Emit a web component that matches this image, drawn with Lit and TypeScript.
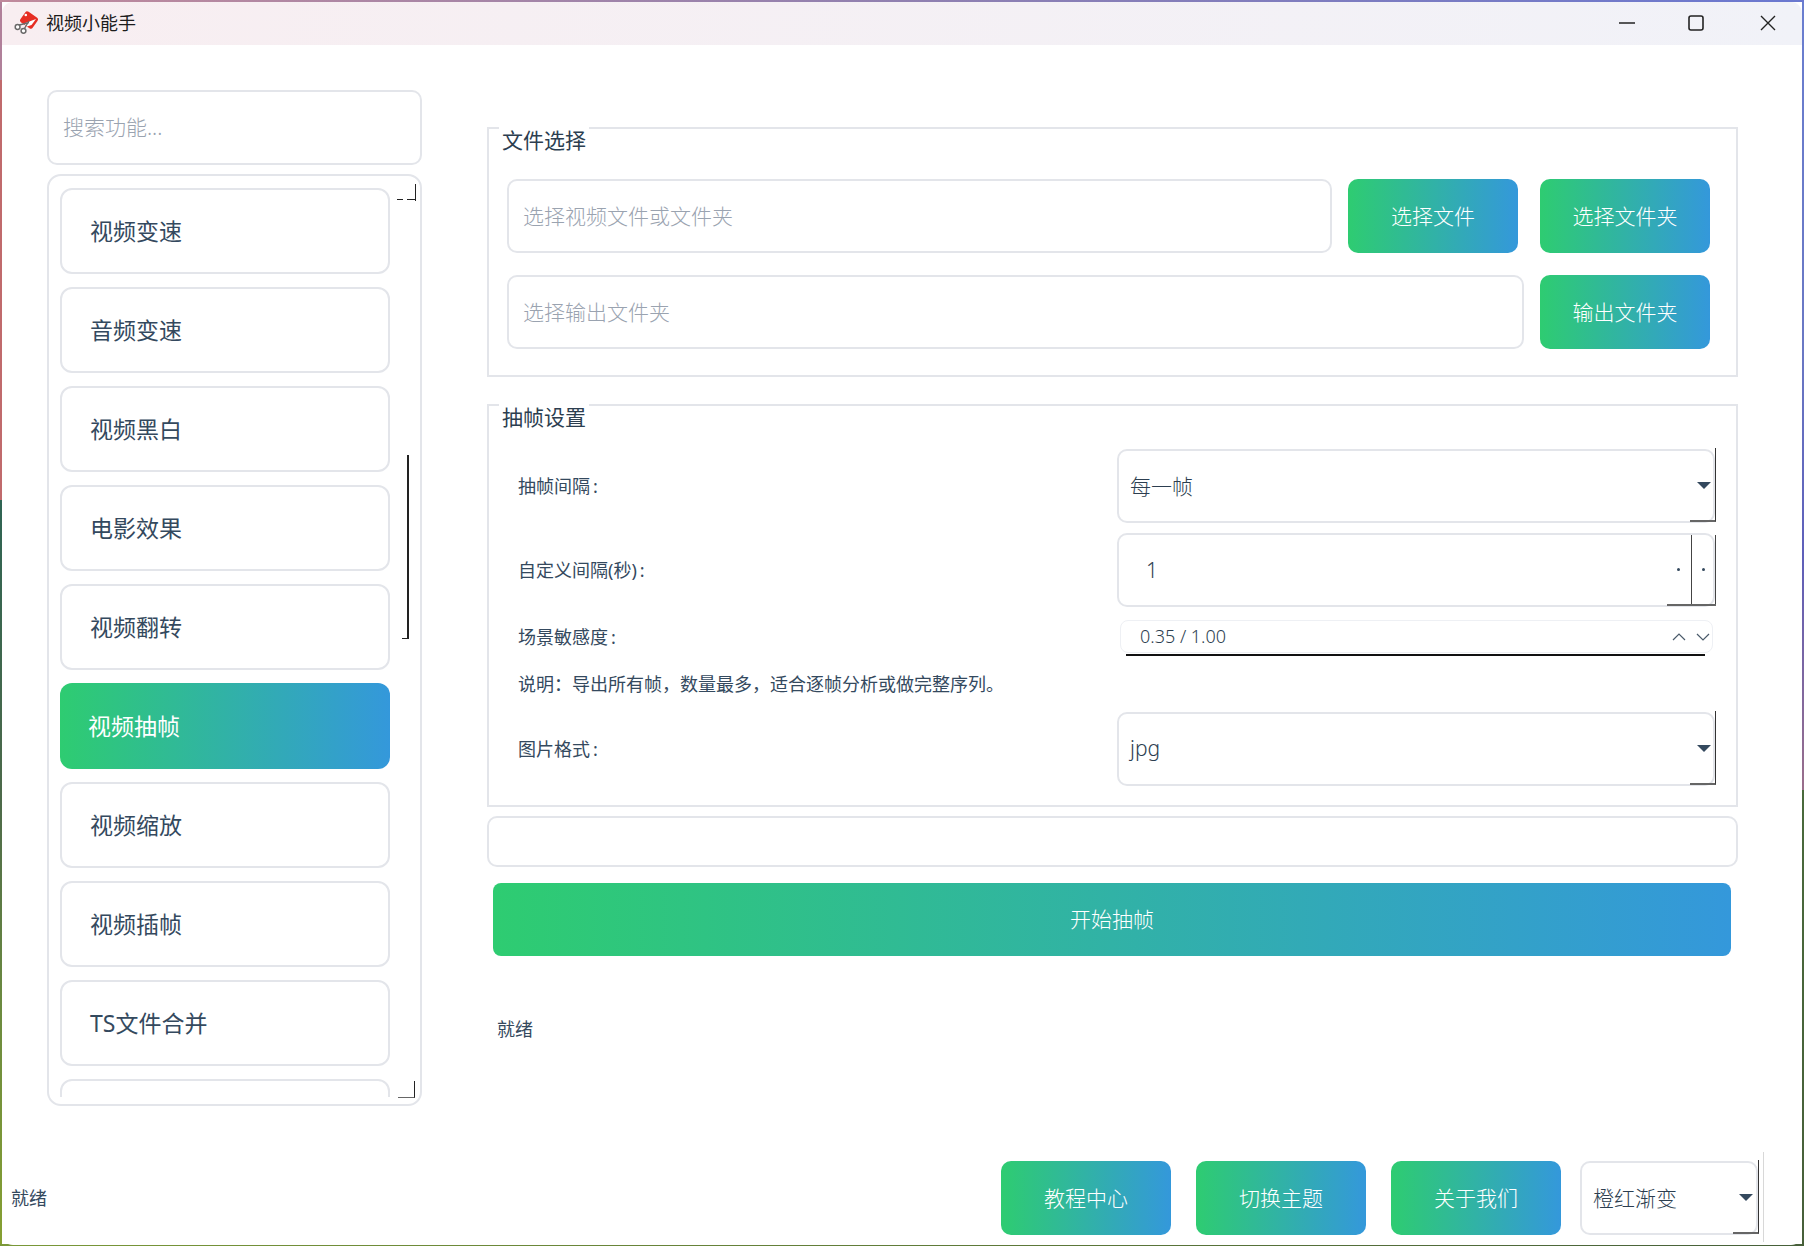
import { LitElement, html, css, svg } from 'lit'
import { customElement } from 'lit/decorators.js'

const NAV = ['视频变速', '音频变速', '视频黑白', '电影效果', '视频翻转', '视频抽帧', '视频缩放', '视频插帧', 'TS文件合并', '']

@customElement('app-root')
export class AppRoot extends LitElement {
    static styles = css`
        :host {
            display: block;
            width: 1804px;
            height: 1246px;
            overflow: hidden;
            box-sizing: border-box;
            padding: 2px 2px 1px;
            font-family: "Noto Sans", "Noto Sans CJK SC", sans-serif;
            font-weight: 300;
            color: #2c3e50;
            background:
                linear-gradient(90deg, #c08a9c 0%, #9080b0 50%, #6a78d0 100%) top / 100% 2px no-repeat,
                linear-gradient(90deg, #7a9838 0%, #47603a 100%) bottom / 100% 2px no-repeat,
                linear-gradient(180deg, #b0809a 0, #b0809a 80px, #c06a6c 80px, #c06a6c 500px, #2f6453 500px, #4d6a4a 800px, #6b8a40 1000px, #86a032 100%) left / 2px 100% no-repeat,
                linear-gradient(180deg, #6a7ed0 0, #6a78c4 350px, #5e5fba 556px, #9a6e8a 790px, #4a6a3c 790px, #47603a 100%) right / 2px 100% no-repeat;
        }
        * { box-sizing: border-box; }
        .window {
            width: 1800px;
            height: 1243px;
            background: #fff;
            border-radius: 11px;
            overflow: hidden;
            display: flex;
            flex-direction: column;
        }
        .titlebar {
            height: 43px;
            flex: none;
            display: flex;
            align-items: center;
            padding-left: 12px;
            background: linear-gradient(90deg, #f8eef1, #f1f2f8);
            color: #1c1c1c;
            font-size: 18px;
            font-weight: 400;
        }
        .titlebar .logo { width: 24px; height: 24px; margin: 0 8px 3px 0; }
        .title { flex: 1; padding-bottom: 3px; }
        .win-btns { display: flex; gap: 45px; padding: 0 22px 2px 0; }
        .win-btns svg { width: 24px; height: 24px; display: block; }
        .win-btns svg:last-child { margin-left: 3px; }

        .main { flex: none; height: 1061px; display: flex; }
        .side { width: 375px; margin: 45px 0 0 45px; display: flex; flex-direction: column; gap: 9px; }
        .field {
            border: 2px solid #e3e5ea;
            border-radius: 10px;
            background: #fff;
            display: flex;
            align-items: center;
            color: #9aa3b0;
        }
        .search { height: 75px; padding: 0 0 3px 14px; font-size: 21px; }
        .list {
            height: 932px;
            position: relative;
            border: 2px solid #e3e5ea;
            border-radius: 14px;
            padding-bottom: 7px;
        }
        .scroll { height: 921px; overflow: hidden; padding: 12px 0 0 11px; display: flex; flex-direction: column; gap: 13px; }
        .nav {
            flex: none;
            width: 330px;
            height: 86px;
            border: 2px solid #e3e5ea;
            border-radius: 12px;
            display: flex;
            align-items: center;
            padding: 0 0 2px 28px;
            font-size: 23px;
            font-weight: 400;
            color: #34495e;
        }
        .nav.active {
            border: none;
            color: #fff;
            background: linear-gradient(90deg, #2ecc71, #3498db);
        }
        .mark { position: absolute; border: 0 solid #222; }
        .m1 { left: 366px; top: 8px; width: 1px; height: 17px; border-right-width: 1.5px; }
        .m2 { left: 358px; top: 23px; width: 8px; border-top-width: 1px; }
        .m3 { left: 348px; top: 23px; width: 6px; border-top-width: 1px; }
        .m4 { left: 353px; top: 279px; width: 7px; height: 184px; border-right-width: 2px; border-bottom-width: 1px; }
        .m5 { left: 349px; top: 905px; width: 17px; height: 17px; border-right-width: 1.5px; border-bottom-width: 1px; border-bottom-color: #666; }

        .content { width: 1251px; margin: 82px 0 0 65px; display: flex; flex-direction: column; }
        .group { border: 2px solid #e3e5ea; }
        .legend {
            width: fit-content;
            margin: -2px 0 0 10px;
            padding: 0 3px;
            height: 28px;
            line-height: 27px;
            background: #fff;
            font-size: 21px;
            font-weight: 400;
            color: #2c3e50;
        }
        .files { height: 250px; }
        .file-rows { margin: 24px 26px 0 18px; display: flex; flex-direction: column; gap: 22px; }
        .file-row { display: flex; height: 74px; }
        .file-row .field { flex: 1; padding: 0 0 2px 14px; font-size: 21px; margin-right: 16px; }
        .btn {
            flex: none;
            display: flex;
            align-items: center;
            justify-content: center;
            width: 170px;
            height: 74px;
            padding-bottom: 2px;
            border-radius: 10px;
            color: #fff;
            font-size: 21px;
            background: linear-gradient(90deg, #2ecc71, #3498db);
        }
        .file-row .btn + .btn { margin-left: 22px; }

        .settings { height: 403px; margin-top: 27px; }
        .rows { margin: 17px 21px 0 29px; display: flex; flex-direction: column; }
        .row { display: flex; align-items: center; font-size: 18px; font-weight: 400; color: #34495e; }
        .row .label { width: 599px; flex: none; padding-bottom: 2px; }
        .combo {
            position: relative;
            flex: 1;
            height: 74px;
            border: 2px solid #e3e5ea;
            border-radius: 10px;
            display: flex;
            align-items: center;
            padding: 0 0 2px 11px;
            font-size: 21px;
            font-weight: 300;
            color: #2c3e50;
        }
        .combo::before {
            content: '';
            position: absolute;
            right: 2px;
            top: 50%;
            margin-top: -4px;
            border: 7px solid transparent;
            border-top: 7px solid #34495e;
            border-bottom: 0;
        }
        .combo::after {
            content: '';
            position: absolute;
            right: -3px;
            bottom: -1px;
            width: 25px;
            height: 72px;
            border-right: 1.5px solid #333;
            border-bottom: 2px solid #666;
        }
        .spin { position: relative; flex: 1; height: 74px; margin-top: 10px; border: 2px solid #e3e5ea; border-radius: 10px;
            display: flex; align-items: center; padding-left: 27px; font-size: 21px; font-weight: 300; color: #2c3e50; }
        .spin-btns {
            position: absolute;
            right: -3px;
            top: 0;
            bottom: -1px;
            width: 49px;
            display: flex;
            border-bottom: 2px solid #666;
        }
        .spin-btns span { flex: 1; display: flex; align-items: center; justify-content: center; }
        .spin-btns span + span { border-left: 1.5px solid #444; border-right: 1.5px solid #444; }
        .spin-btns i { display: block; width: 3px; height: 3px; background: #34495e; border-radius: 50%; }
        .slider-wrap { flex: 1; padding: 0 2px 0 3px; }
        .slider {
            height: 33px;
            border: 1px solid #eef0f4;
            border-radius: 8px;
            display: flex;
            align-items: center;
            padding-left: 19px;
            font-size: 18px;
            font-weight: 300;
            color: #2c3e50;
        }
        .slider .val { flex: 1; padding-bottom: 2px; }
        .slider svg { width: 16px; height: 10px; margin-right: 8px; display: block; }
        .slider svg:last-child { margin-right: 1px; }
        .line { height: 2px; margin: 1px 8px 0 6px; background: #111; }
        .desc { height: 24px; line-height: 24px; margin: 16px 0 16px; font-size: 18px; font-weight: 400; color: #34495e; }

        .progress { height: 51px; margin-top: 9px; border: 2px solid #e3e5ea; border-radius: 10px; }
        .start {
            width: 1238px;
            height: 73px;
            margin: 16px 0 0 6px;
            padding-bottom: 3px;
            border-radius: 8px;
            display: flex;
            align-items: center;
            justify-content: center;
            color: #fff;
            font-size: 21px;
            background: linear-gradient(90deg, #2ecc71, #3498db);
        }
        .status { margin: 61px 0 0 10px; font-size: 18px; line-height: 24px; font-weight: 400; color: #34495e; }

        .bottom { flex: 1; display: flex; align-items: flex-start; padding-top: 55px; }
        .bottom .status { margin: 25px 0 0 9px; flex: 1; }
        .bottom .btn { margin-right: 25px; }
        .bottom .combo { flex: none; width: 178px; height: 74px; margin-left: -6px; }
        .bottom .combo::before { right: 3px; }
        .bottom .edge { width: 1px; height: 90px; margin: -9px 38px 0 5px; background: #d8d8d8; }
    `

    private chevron(up: boolean) {
        return html`<svg viewBox="0 0 16 10" fill="none" stroke="#4a5a6a" stroke-width="1.2">
            ${svg`<path d=${up ? 'M2 8 L8 2 L14 8' : 'M2 2 L8 8 L14 2'}></path>`}
        </svg>`
    }

    private logo() {
        return html`<svg class="logo" viewBox="0 0 24 24">
            <rect x="7.5" y="3.5" width="15" height="13" rx="2.5" fill="#e62e24" transform="rotate(35 15 10)"></rect>
            <circle cx="11.8" cy="5" r="1.3" fill="#fff"></circle>
            <path d="M10 13.5 L22 9 L17.5 15 L13 16.5 Z" fill="#fff"></path>
            <path d="M3.5 15.5 L15 12.5 M9.5 20 L15 11" stroke="#6a6a6a" stroke-width="1.4" fill="none"></path>
            <circle cx="3.6" cy="17" r="2.4" fill="#fff" stroke="#6a6a6a" stroke-width="1.5"></circle>
            <circle cx="9.5" cy="20.8" r="2.4" fill="#fff" stroke="#6a6a6a" stroke-width="1.5"></circle>
        </svg>`
    }

    protected override render() {
        return html`
            <div class="window">
                <div class="titlebar">
                    ${this.logo()}
                    <span class="title">视频小能手</span>
                    <div class="win-btns">
                        <svg viewBox="0 0 24 24"><path d="M4 12 H20" stroke="#222" stroke-width="1.4"></path></svg>
                        <svg viewBox="0 0 24 24"><rect x="5" y="5" width="14" height="14" rx="2" fill="none" stroke="#222" stroke-width="1.6"></rect></svg>
                        <svg viewBox="0 0 24 24"><path d="M5 5 L19 19 M19 5 L5 19" stroke="#222" stroke-width="1.4"></path></svg>
                    </div>
                </div>
                <div class="main">
                    <div class="side">
                        <div class="field search">搜索功能...</div>
                        <div class="list">
                            <div class="scroll">
                                ${NAV.map(n => html`<div class="nav ${n === '视频抽帧' ? 'active' : ''}">${n}</div>`)}
                            </div>
                            <div class="mark m1"></div>
                            <div class="mark m2"></div>
                            <div class="mark m3"></div>
                            <div class="mark m4"></div>
                            <div class="mark m5"></div>
                        </div>
                    </div>
                    <div class="content">
                        <div class="group files">
                            <div class="legend">文件选择</div>
                            <div class="file-rows">
                                <div class="file-row">
                                    <div class="field">选择视频文件或文件夹</div>
                                    <div class="btn">选择文件</div>
                                    <div class="btn">选择文件夹</div>
                                </div>
                                <div class="file-row">
                                    <div class="field">选择输出文件夹</div>
                                    <div class="btn">输出文件夹</div>
                                </div>
                            </div>
                        </div>
                        <div class="group settings">
                            <div class="legend">抽帧设置</div>
                            <div class="rows">
                                <div class="row">
                                    <span class="label">抽帧间隔&thinsp;:</span>
                                    <div class="combo">每一帧</div>
                                </div>
                                <div class="row">
                                    <span class="label" style="margin-top:10px">自定义间隔(秒)&thinsp;:</span>
                                    <div class="spin">1
                                        <div class="spin-btns"><span><i></i></span><span><i></i></span></div>
                                    </div>
                                </div>
                                <div class="row" style="margin-top:13px;align-items:flex-start">
                                    <span class="label" style="line-height:34px">场景敏感度&thinsp;:</span>
                                    <div class="slider-wrap">
                                        <div class="slider">
                                            <span class="val">0.35 / 1.00</span>
                                            ${this.chevron(true)}
                                            ${this.chevron(false)}
                                        </div>
                                        <div class="line"></div>
                                    </div>
                                </div>
                                <div class="desc">说明：导出所有帧，数量最多，适合逐帧分析或做完整序列。</div>
                                <div class="row">
                                    <span class="label">图片格式&thinsp;:</span>
                                    <div class="combo">jpg</div>
                                </div>
                            </div>
                        </div>
                        <div class="progress"></div>
                        <div class="start">开始抽帧</div>
                        <div class="status">就绪</div>
                    </div>
                </div>
                <div class="bottom">
                    <div class="status">就绪</div>
                    <div class="btn">教程中心</div>
                    <div class="btn">切换主题</div>
                    <div class="btn">关于我们</div>
                    <div class="combo">橙红渐变</div>
                    <div class="edge"></div>
                </div>
            </div>
        `
    }
}
